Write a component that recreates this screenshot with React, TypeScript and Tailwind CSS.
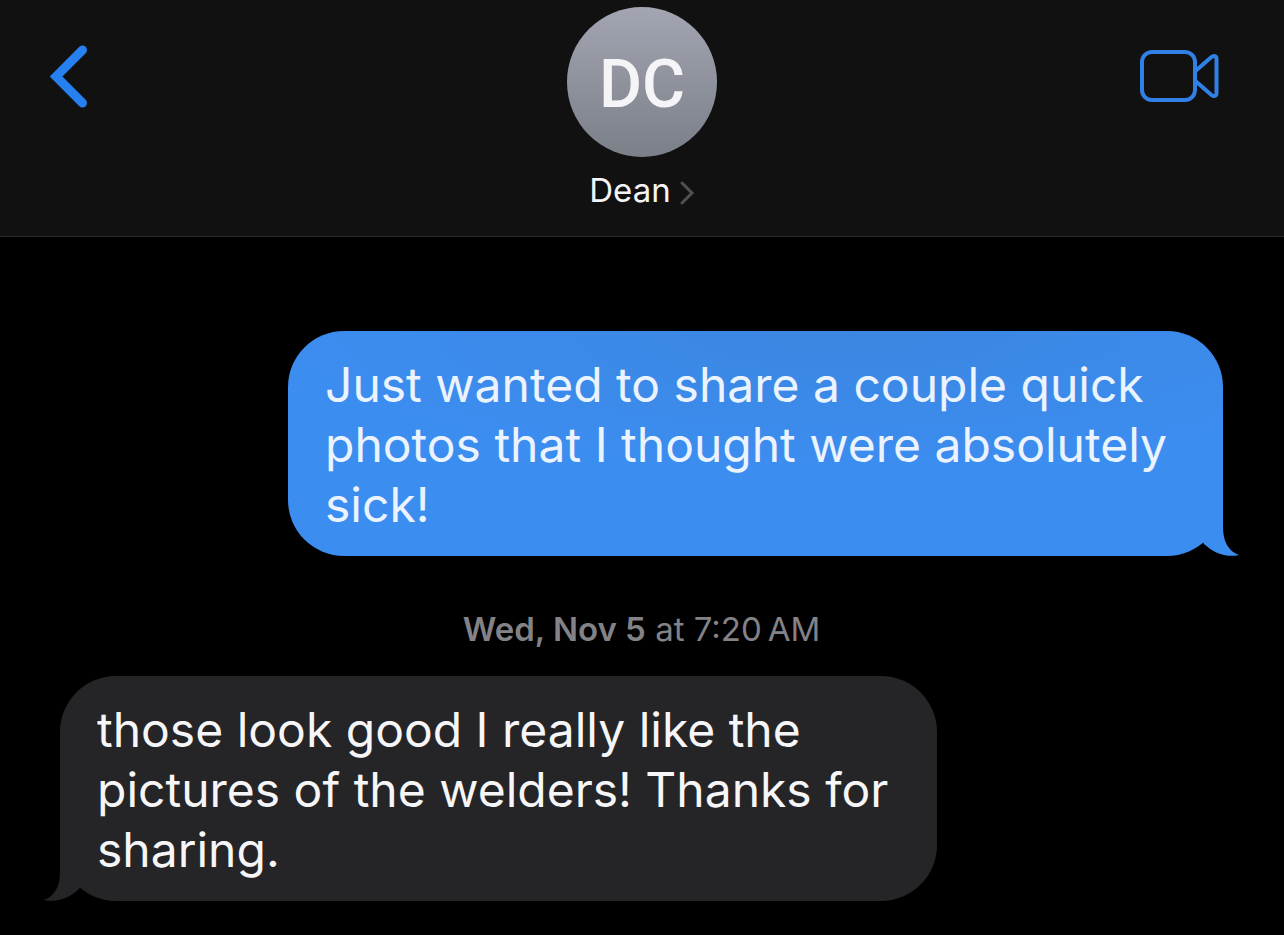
import React from "react";

type Side = "sent" | "received";

interface BubbleProps {
  side: Side;
  children: React.ReactNode;
}

function Tail({ side }: { side: Side }) {
  const sent = side === "sent";
  return (
    <svg
      aria-hidden="true"
      viewBox="0 0 56 66"
      className={
        sent
          ? "absolute bottom-0 -right-4 h-[66px] w-14 text-[#3c8df0]"
          : "absolute bottom-0 -left-4 h-[66px] w-14 -scale-x-100 text-[#252527]"
      }
    >
      <path
        d="M40 0V37C40 51 45 61 56 65C43 68 31 63 21 54L14 40Z"
        fill="currentColor"
      />
    </svg>
  );
}

function Bubble({ side, children }: BubbleProps) {
  const sent = side === "sent";
  return (
    <div className={sent ? "flex justify-end" : "flex justify-start"}>
      <div
        className={
          sent
            ? "relative w-full max-w-[935px]"
            : "relative w-full max-w-[877px]"
        }
      >
        <Tail side={side} />
        <p
          className={
            sent
              ? "relative rounded-[56px] bg-[#3c8df0] bg-[radial-gradient(ellipse_60%_60%_at_60%_0%,#3b86e0_0%,#3c8df0_100%)] pt-6 pr-8 pb-[21px] pl-[37px] text-[48px] leading-[60px] text-[#eaf3fe]"
              : "relative rounded-[56px] bg-[#252527] pt-6 pr-8 pb-[21px] pl-[37px] text-[48px] leading-[60px] text-[#f6f6f8]"
          }
        >
          {children}
        </p>
      </div>
    </div>
  );
}

function BackIcon() {
  return (
    <svg aria-hidden="true" viewBox="0 0 40 66" className="h-[66px] w-10" fill="none">
      <path
        d="M32.500 6L6 32.500L32.500 59"
        stroke="#2680f0"
        strokeWidth="9"
        strokeLinecap="round"
        strokeLinejoin="miter"
      />
    </svg>
  );
}

function VideoIcon() {
  return (
    <svg
      aria-hidden="true"
      viewBox="0 0 80 54"
      className="h-[54px] w-20"
      fill="none"
      stroke="#3080e6"
      strokeWidth="4"
      strokeLinejoin="round"
    >
      <rect x="3" y="3" width="53" height="48" rx="10" />
      <path d="M57 21.500L72.500 8C75 6 77.500 7 77.500 10V44C77.500 47 75 48 72.500 46L57 32.500" />
    </svg>
  );
}

export default function App() {
  return (
    <div className="min-h-screen bg-black font-['Inter','Noto_Sans',sans-serif]">
      <header className="grid grid-cols-[1fr_auto_1fr] items-start border-b border-[#2a2a2b] bg-[#111111] px-[50px] pt-[7px] pb-6">
        <button type="button" aria-label="Back" className="mt-[37px] justify-self-start">
          <BackIcon />
        </button>
        <button type="button" className="flex flex-col items-center gap-3">
          <span className="flex size-[150px] items-center justify-center rounded-full bg-linear-to-b from-[#a3a6b2] to-[#7b7f88] pt-1 font-['Roboto','Inter',sans-serif] text-[66px] font-medium text-[#f5f5f7]">
            DC
          </span>
          <span className="flex items-center gap-2 text-[33px] leading-[43px] text-[#f4f4f5]">
            Dean
            <svg aria-hidden="true" viewBox="0 0 16 26" className="mt-1 h-[26px] w-4" fill="none">
              <path
                d="M3 3L13 13L3 23"
                stroke="#505053"
                strokeWidth="3"
                strokeLinecap="round"
              />
            </svg>
          </span>
        </button>
        <button type="button" aria-label="Video call" className="mt-[42px] mr-[15px] justify-self-end">
          <VideoIcon />
        </button>
      </header>

      <main className="pt-[94px] pr-[61px] pb-8 pl-[60px]">
        <Bubble side="sent">
          Just wanted to share a couple quick photos that I thought were absolutely sick!
        </Bubble>
        <p className="pt-[53px] pb-[27px] text-center text-[33px] leading-10 text-[#828287]">
          <span className="font-semibold">Wed, Nov 5</span> at 7:20{"\u202f"}AM
        </p>
        <Bubble side="received">
          those look good I really like the pictures of the welders! Thanks for sharing.
        </Bubble>
      </main>
    </div>
  );
}
